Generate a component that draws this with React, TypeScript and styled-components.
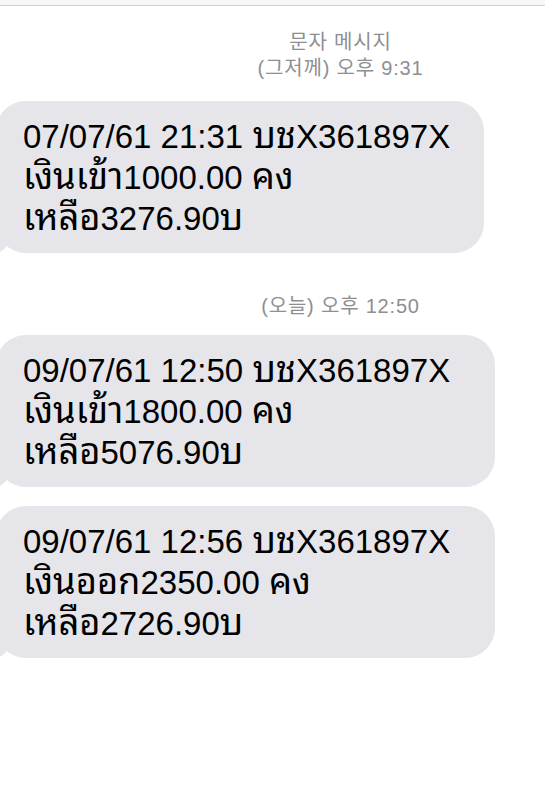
import { createGlobalStyle } from "styled-components";
import styled from "styled-components";

const BUBBLE_GRAY = "#e5e5ea";
const THAI_FONTS =
  '"Noto Sans Thai Looped", "Noto Serif Thai", "Loma", "Garuda", "Tlwg Typo", "Noto Sans Thai"';

const GlobalStyle = createGlobalStyle`
  html, body {
    margin: 0;
    padding: 0;
    background: #ffffff;
  }
  body {
    font-family: "Liberation Sans", ${THAI_FONTS}, "Noto Sans CJK KR", sans-serif;
    -webkit-font-smoothing: antialiased;
  }
`;

const Screen = styled.div`
  width: 545px;
  min-height: 803px;
  overflow: hidden;
  background: #ffffff;
`;

const TopBar = styled.div`
  height: 5px;
  background: #f7f7f7;
  border-bottom: 1px solid #d2d2d2;
`;

const Thread = styled.div`
  display: flex;
  flex-direction: column;
  align-items: flex-start;
`;

const TimeHeader = styled.div<{ $top: number }>`
  align-self: stretch;
  box-sizing: border-box;
  padding-left: 136px;
  margin-top: ${(props) => props.$top}px;
  text-align: center;
  color: #8e8e93;
  font-family: "Liberation Sans", "Noto Sans CJK KR", sans-serif;
  font-size: 20px;
  letter-spacing: 0.8px;
  line-height: 26px;
`;

const Bubble = styled.div<{ $top: number; $right: number }>`
  position: relative;
  margin-top: ${(props) => props.$top}px;
  margin-left: -4px;
  padding: 15px ${(props) => props.$right}px 14px 27px;
  background: ${BUBBLE_GRAY};
  border-radius: 30px;
  color: #000000;
  font-size: 33px;
  line-height: 41px;
  white-space: nowrap;

  &::before {
    content: "";
    position: absolute;
    bottom: 0;
    left: -7px;
    width: 20px;
    height: 20px;
    background: ${BUBBLE_GRAY};
    border-bottom-right-radius: 15px;
  }

  &::after {
    content: "";
    position: absolute;
    bottom: 0;
    left: -10px;
    width: 10px;
    height: 20px;
    background: #ffffff;
    border-bottom-right-radius: 10px;
  }
`;

const Line = styled.div`
  height: 41px;
`;

// the Thai fallback font runs small next to the Latin digits, so scale it up
// without letting its tall ascent push the baseline down
const ThaiRun = styled.span`
  font-family: ${THAI_FONTS}, sans-serif;
  font-size: 1.1em;
  line-height: 0;
`;

type Message = {
  header?: string[];
  headerTop?: number;
  top: number;
  right: number;
  lines: string[];
};

const messages: Message[] = [
  {
    header: ["문자 메시지", "(그저께) 오후 9:31"],
    headerTop: 23,
    top: 20,
    right: 34,
    lines: ["07/07/61 21:31 บชX361897X", "เงินเข้า1000.00 คง", "เหลือ3276.90บ"],
  },
  {
    header: ["(오늘) 오후 12:50"],
    headerTop: 40,
    top: 16,
    right: 45,
    lines: ["09/07/61 12:50 บชX361897X", "เงินเข้า1800.00 คง", "เหลือ5076.90บ"],
  },
  {
    top: 19,
    right: 45,
    lines: ["09/07/61 12:56 บชX361897X", "เงินออก2350.00 คง", "เหลือ2726.90บ"],
  },
];

const renderRuns = (text: string) =>
  text
    .split(/([\u0E00-\u0E7F]+)/)
    .filter(Boolean)
    .map((run, i) =>
      /[\u0E00-\u0E7F]/.test(run) ? <ThaiRun key={i}>{run}</ThaiRun> : run,
    );

const MessageGroup = ({ message }: { message: Message }) => (
  <>
    {message.header && (
      <TimeHeader $top={message.headerTop ?? 0}>
        {message.header.map((text) => (
          <div key={text}>{text}</div>
        ))}
      </TimeHeader>
    )}
    <Bubble $top={message.top} $right={message.right}>
      {message.lines.map((text) => (
        <Line key={text}>{renderRuns(text)}</Line>
      ))}
    </Bubble>
  </>
);

export default function App() {
  return (
    <>
      <GlobalStyle />
      <Screen>
        <TopBar />
        <Thread>
          {messages.map((message, i) => (
            <MessageGroup key={i} message={message} />
          ))}
        </Thread>
      </Screen>
    </>
  );
}
